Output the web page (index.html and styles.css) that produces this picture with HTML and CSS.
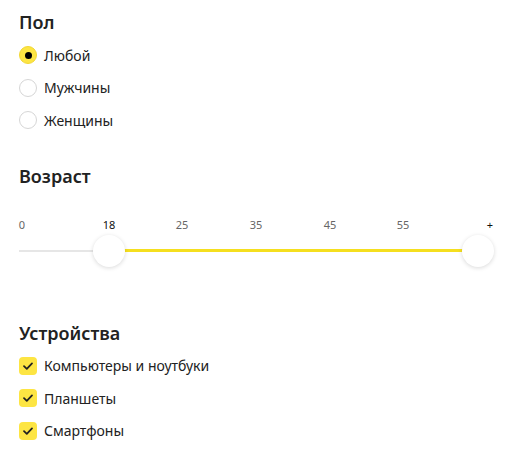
FILE: index.html
```html
<!DOCTYPE html>
<html lang="ru">
<head>
    <meta charset="UTF-8">
    <title>Фильтры аудитории</title>
    <link rel="stylesheet" href="styles.css">
</head>
<body>
    <div class="section">
        <h3 class="title">Пол</h3>
        <label class="option"><span class="radio checked"></span>Любой</label>
        <label class="option"><span class="radio"></span>Мужчины</label>
        <label class="option"><span class="radio"></span>Женщины</label>
    </div>

    <div class="section">
        <h3 class="title">Возраст</h3>
        <div class="slider">
            <div class="ticks">
                <span class="tick" style="left: 3px">0</span>
                <span class="tick active" style="left: 90px">18</span>
                <span class="tick" style="left: 163px">25</span>
                <span class="tick" style="left: 237px">35</span>
                <span class="tick" style="left: 311px">45</span>
                <span class="tick" style="left: 384px">55</span>
                <span class="tick active" style="left: 471px">+</span>
            </div>
            <div class="track">
                <div class="range" style="left: 90px; width: 369px"></div>
                <div class="thumb" style="left: 90px"></div>
                <div class="thumb" style="left: 459px"></div>
            </div>
        </div>
    </div>

    <div class="section">
        <h3 class="title">Устройства</h3>
        <label class="option"><span class="check"><svg width="12" height="10" viewBox="0 0 12 10"><path d="M2 5.2 L4.8 7.8 L10 2.4" fill="none" stroke="#222" stroke-width="1.8" stroke-linecap="round" stroke-linejoin="round"/></svg></span>Компьютеры и ноутбуки</label>
        <label class="option"><span class="check"><svg width="12" height="10" viewBox="0 0 12 10"><path d="M2 5.2 L4.8 7.8 L10 2.4" fill="none" stroke="#222" stroke-width="1.8" stroke-linecap="round" stroke-linejoin="round"/></svg></span>Планшеты</label>
        <label class="option"><span class="check"><svg width="12" height="10" viewBox="0 0 12 10"><path d="M2 5.2 L4.8 7.8 L10 2.4" fill="none" stroke="#222" stroke-width="1.8" stroke-linecap="round" stroke-linejoin="round"/></svg></span>Смартфоны</label>
    </div>
</body>
</html>
```

FILE: styles.css
```css
body {
    margin: 0;
    padding: 9px 0 0 19px;
    font-family: "Noto Sans", Arial, sans-serif;
    color: #222;
    background-color: #fff;
}
.section {
    margin-bottom: 26px;
}
.title {
    margin: 0 0 4px 0;
    font-size: 18px;
    font-weight: 600;
    line-height: 26px;
}
.option {
    display: flex;
    align-items: center;
    height: 32.5px;
    font-size: 14px;
    color: #222;
}
.radio {
    width: 16px;
    height: 16px;
    border: 1px solid #d6d6d6;
    border-radius: 50%;
    margin-right: 7px;
    box-sizing: content-box;
    display: flex;
    align-items: center;
    justify-content: center;
}
.radio.checked {
    background-color: #fde543;
    border-color: #f2d734;
}
.radio.checked::after {
    content: "";
    width: 7px;
    height: 7px;
    border-radius: 50%;
    background-color: #000;
}
.check {
    width: 18px;
    height: 18px;
    border-radius: 4px;
    background-color: #fde543;
    margin-right: 7px;
    display: flex;
    align-items: center;
    justify-content: center;
}
.slider {
    width: 472px;
    padding-top: 24px;
    padding-bottom: 42px;
}
.ticks {
    position: relative;
    height: 20px;
    font-size: 11px;
    color: #666;
}
.tick {
    position: absolute;
    top: 0;
    transform: translateX(-50%);
}
.tick.active {
    color: #111;
}
.track {
    position: relative;
    height: 2px;
    margin-top: 13px;
    background-color: #e6e6e6;
}
.range {
    position: absolute;
    top: -0.5px;
    height: 3px;
    background-color: #f5df1f;
}
.thumb {
    position: absolute;
    top: -15px;
    width: 32px;
    height: 32px;
    margin-left: -16px;
    border-radius: 50%;
    background-color: #fff;
    box-shadow: 0 1px 4px rgba(0, 0, 0, 0.15);
}
```
